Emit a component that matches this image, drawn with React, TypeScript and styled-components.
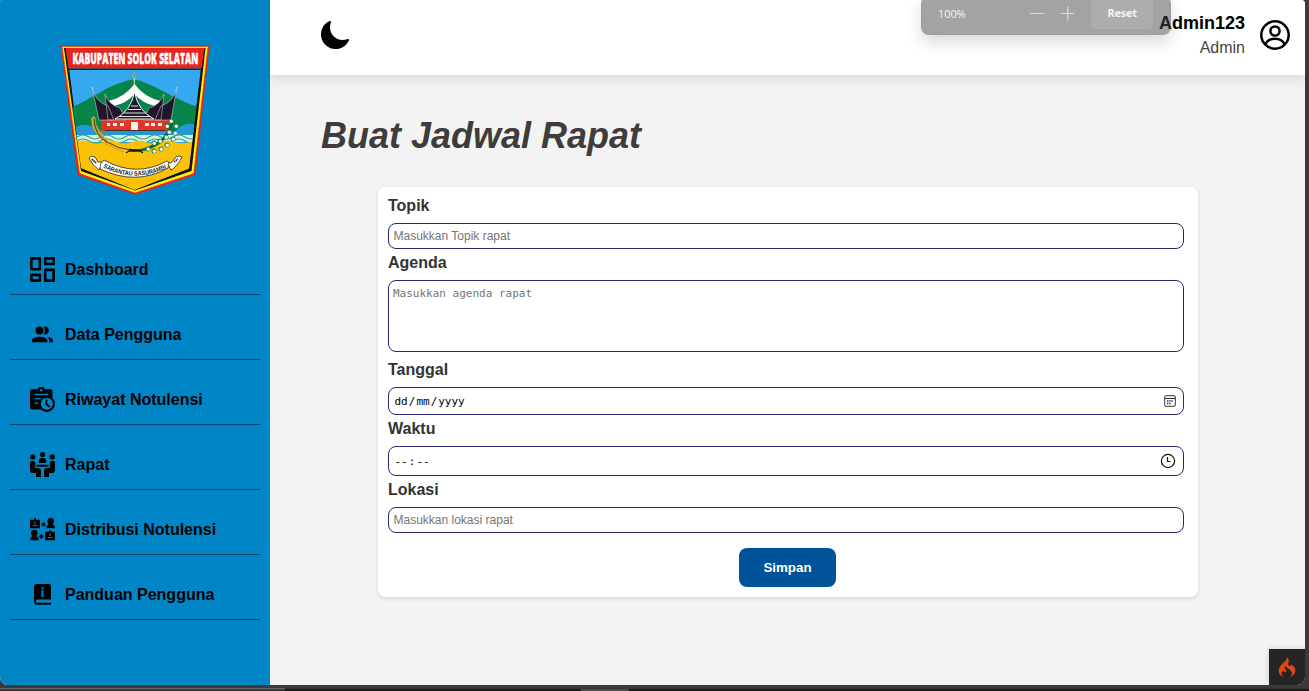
import React from "react";
import styled, { createGlobalStyle } from "styled-components";
import { IoMoon } from "react-icons/io5";
import { SiCodeigniter } from "react-icons/si";

const GlobalStyle = createGlobalStyle`
  * { box-sizing: border-box; }
  html, body { margin: 0; padding: 0; overflow: hidden; }
  body { font-family: "Liberation Sans", Arial, sans-serif; background: #383a3b; }
`;

const Desktop = styled.div`
  width: 1309px;
  height: 691px;
  background: #383a3b;
  display: flex;
  flex-direction: column;
  justify-content: space-between;
`;

const Window = styled.div`
  position: relative;
  width: 1305px;
  height: 685px;
  display: flex;
  background: #f3f3f3;
  border-radius: 2px 4px 8px 8px;
  overflow: hidden;
`;

const Taskbar = styled.div`
  display: flex;
  height: 3px;
  border-top: 1px solid #353535;
`;

const TaskSegment = styled.div<{ $width?: number; $color: string; $line?: boolean }>`
  height: ${(p) => (p.$line ? 3 : 2)}px;
  margin-top: ${(p) => (p.$line ? -1 : 0)}px;
  border-top: ${(p) => (p.$line ? "1px solid #686868" : "0")};
  background: ${(p) => p.$color};
  ${(p) => (p.$width ? `width: ${p.$width}px;` : "flex: 1;")}
`;

const Sidebar = styled.aside`
  width: 270px;
  flex: none;
  background: #0086c7;
  display: flex;
  flex-direction: column;
`;

const LogoBox = styled.div`
  height: 230px;
  padding: 35px 50px 0;
`;

const Menu = styled.nav`
  padding: 0 10px;
`;

const MenuItem = styled.a`
  height: 65px;
  padding: 15px 0 0 20px;
  display: flex;
  align-items: center;
  gap: 10px;
  border-bottom: 1px solid #09466a;
  color: #000;
  font-size: 16px;
  font-weight: bold;
  text-decoration: none;
  svg { flex: none; }
`;

const Main = styled.main`
  flex: 1;
  display: flex;
  flex-direction: column;
`;

const Header = styled.header`
  height: 75px;
  padding: 0 15px 0 50px;
  display: flex;
  align-items: center;
  justify-content: space-between;
  background: #fff;
  box-shadow: 0 3px 12px rgba(0, 0, 0, 0.13);
`;

const ThemeToggle = styled.div`
  display: flex;
  margin: -5px 0 0 -1px;
`;

const Profile = styled.div`
  display: flex;
  align-items: center;
  gap: 15px;
  margin-top: -5px;
`;

const ProfileText = styled.div`
  text-align: right;
`;

const UserName = styled.div`
  font-size: 18px;
  line-height: 24px;
  font-weight: bold;
  color: #000;
`;

const UserRole = styled.div`
  padding-top: 1px;
  margin-bottom: -1px;
  font-size: 16px;
  line-height: 24px;
  color: #454545;
`;

const Title = styled.h1`
  margin: 40px 0 31px 51px;
  font-size: 36px;
  line-height: 41px;
  font-style: italic;
  color: #403c3b;
`;

const Card = styled.form`
  width: 820px;
  height: 410px;
  margin-left: 108px;
  padding: 5px 14px 10px 10px;
  background: #fff;
  border-radius: 8px;
  box-shadow: 0 2px 4px rgba(0, 0, 0, 0.1);
  display: flex;
  flex-direction: column;
`;

const Label = styled.label`
  height: 31px;
  padding-bottom: 4px;
  line-height: 27px;
  font-size: 16px;
  font-weight: bold;
  color: #333;
`;

const Field = styled.div<{ $height: number }>`
  height: ${(p) => p.$height}px;
  flex: none;
  padding: 0 7px 0 4.5px;
  display: flex;
  align-items: center;
  justify-content: space-between;
  border: 1px solid #27286f;
  border-radius: 8px;
  background: #fff;
`;

const TextInput = styled.input`
  flex: 1;
  padding: 0;
  border: 0;
  outline: 0;
  background: none;
  font: 12px "Liberation Sans", Arial, sans-serif;
  &::placeholder { color: #757575; opacity: 1; }
`;

const TextArea = styled.textarea`
  height: 72px;
  flex: none;
  margin-bottom: 4px;
  padding: 6px 4px;
  border: 1px solid #27286f;
  border-radius: 8px;
  outline: 0;
  resize: none;
  font: 11px/14px "DejaVu Sans Mono", monospace;
  &::placeholder { color: #757575; opacity: 1; }
`;

const DateParts = styled.div`
  display: flex;
  font: 11px/15px "DejaVu Sans Mono", monospace;
  color: #000;
  span { padding: 0 1px; }
`;

const PickerIcon = styled.svg<{ $size: number }>`
  width: ${(p) => p.$size}px;
  height: ${(p) => p.$size}px;
`;

const SaveButton = styled.button`
  align-self: center;
  width: 97px;
  height: 39px;
  margin: 15px 0 0 3px;
  padding: 0;
  border: 0;
  border-radius: 8px;
  background: #005399;
  color: #fff;
  font: bold 13.333px "Liberation Sans", Arial, sans-serif;
`;

const ZoomPopup = styled.div`
  position: absolute;
  top: -4px;
  left: 921px;
  width: 250px;
  height: 39px;
  padding: 4px 17px 0 16px;
  display: flex;
  border-radius: 8px;
  border: 1px solid rgba(120, 120, 120, 0.15);
  border-top: 0;
  background: rgba(69, 69, 69, 0.494);
  box-shadow: 0 8px 16px rgba(0, 0, 0, 0.14);
  color: #f4f4f4;
  font: 500 11px/27px "Open Sans", sans-serif;
`;

const ZoomValue = styled.span`
  width: 91px;
  letter-spacing: -0.1px;
`;

const ZoomReset = styled.span`
  width: 62px;
  height: 29px;
  margin-left: 17px;
  line-height: 26px;
  text-align: center;
  font-weight: 700;
  letter-spacing: -0.2px;
  border-radius: 0 0 4px 4px;
  background: #adadad;
`;

const DebugBadge = styled.div`
  position: absolute;
  right: 0;
  bottom: 0;
  width: 36px;
  height: 36px;
  display: flex;
  align-items: center;
  justify-content: center;
  background: #252525;
  color: #dd4814;
  box-shadow: 0 0 6px rgba(0, 0, 0, 0.15);
`;

const grains = [0, 1, 2, 3, 4, 5, 6, 7];

const cotton = [
  [98, 114], [104, 108], [104, 116], [110, 106], [111, 114], [116, 102], [117, 110],
  [119, 97], [123, 104], [117, 91], [125, 98], [121, 86], [126, 91],
];

function RegencyCrest() {
  return (
    <svg width="170" height="170" viewBox="0 0 170 170">
      <defs>
        <clipPath id="crest"><path d="M15 14H153.500L139 133.500L84.500 155L31 133Z" /></clipPath>
        <path id="motto" d="M53 132.500Q86 149 119 132" />
      </defs>
      <path d="M10.500 10H159.500L145.500 140L85 159.800L27.500 140Z" fill="#e5231c" />
      <path d="M12 11.500H158L143.800 138.500L85 158L29.500 138.500Z" fill="#ffed14" stroke="#d9291f" strokeWidth=".8" strokeDasharray="1.500 1" />
      <path d="M14 13H155.500L141.500 136L85 155.500L31 136Z" fill="#111" />
      <g clipPath="url(#crest)">
        <path d="M19 33H151L139 135L85 153L32 135Z" fill="#35a8ef" />
        <path d="M20 73C42 64 57 51 73 47Q84 42 96 48C115 56 128 66 151 73L144 101H26Z" fill="#078449" />
        <path d="M26 92Q37 86 48 96H125Q136 86 145 90V101H27Z" fill="#2597d8" />
        <path d="M25 100H146V107H26Z" fill="#d8f1df" />
        <path d="M27 102Q33 98 39 102T51 102T63 102T75 102T87 102T99 102T111 102T123 102T135 102T147 102M27 106Q33 102 39 106T51 106T63 106T75 106T87 106T99 106T111 106T123 106T135 106T147 106" fill="none" stroke="#27a891" strokeWidth="1.200" />
        <path d="M26 107Q34 104 40 107T54 107T68 107T82 107T96 107T110 107T124 107T145 106L139 137L85 156L31 136Z" fill="#fbc008" />
      </g>
      <path d="M15.500 13H154.500L151.500 33.500H18.500Z" fill="#e5251d" />
      <path d="M18.500 33.500H151.500L150.500 35H19Z" fill="#25201e" />
      <g transform="translate(22.500 29) scale(.62 1)">
        <text textLength="203" lengthAdjust="spacingAndGlyphs" fontFamily="Open Sans, sans-serif" fontSize="16" fontWeight="800" fill="#fff" stroke="#fff" strokeWidth=".4">KABUPATEN SOLOK SELATAN</text>
      </g>
      <path d="M51 85H119V96H51Z" fill="#dd3524" />
      <path d="M58 66Q74 63 84.500 49Q95 63 111 66L105 71Q92 68 84.500 59Q77 68 64 71Z" fill="#fff" />
      <path d="M42 52Q45 67 58 71L64 85H49ZM55 59Q59 70 70 73L76 85H58ZM127 52Q124 67 111 71L105 85H121ZM114 59Q110 70 99 73L93 85H111Z" fill="#20162d" stroke="#ddd" strokeWidth=".5" />
      <path d="M84.500 57Q81 76 65 84H104Q88 76 84.500 57Z" fill="#201a2d" stroke="#f5f5f5" strokeWidth="1" />
      <path d="M81 71H88M78 74.500H91M74 78H95M69 81.500H100" stroke="#f5f5f5" strokeWidth=".9" />
      <path d="M56 86H114V95H56Z" fill="#dc3829" />
      <path d="M57 88H60V91H57ZM63 88H67V91H63ZM70 88H74V91H70ZM81 87H88V95H81ZM95 88H99V91H95ZM101 88H105V91H101ZM108 88H112V91H108Z" fill="#f5efed" />
      <path d="M55 95.500H115" stroke="#4a2a25" />
      <circle cx="84.300" cy="40.500" r="1.800" fill="none" stroke="#d9a51d" />
      <path d="M84.300 43V57" stroke="#efe8bc" />
      {grains.map((n) => (
        <g key={n}>
          <ellipse cx={43.500 + n * n * 0.250} cy={84.500 + n * 3} rx="1.800" ry="2.800" fill="#b99a25" stroke="#e2bd37" strokeWidth=".6" />
          <ellipse cx={50 + n * 3.200} cy={106 + n * 1.500} rx="2" ry=".8" fill="#dba412" />
        </g>
      ))}
      <path d="M44 84Q45 101 57 107Q68 114 81 115" fill="none" stroke="#433a1d" strokeWidth="1" />
      <path d="M79 115Q91 117 101 112Q118 105 122 87" fill="none" stroke="#126337" strokeWidth="3" />
      {cotton.map(([x, y]) => (
        <g key={`${x}-${y}`}>
          <circle cx={x} cy={y} r="2.500" fill="#118650" />
          <circle cx={x + 0.3} cy={y + 0.3} r="1.700" fill="#f2faee" />
        </g>
      ))}
      <path d="M76 118L80 115.500H89L93 118M79 115L89 115.500" fill="none" stroke="#201a15" strokeWidth="1.300" />
      <path d="M39 123Q41 120 45 122L48 127H53L49 135Q43 131 39 123ZM132 122Q129 120 126 122L121 128L117 127L121 135Q127 132 132 122Z" fill="#fff" stroke="#292222" strokeWidth=".8" />
      <path d="M54 125Q86 143 117 126Q120 127 118 133Q86 151 50 134Q49 129 54 125Z" fill="#fff" stroke="#292222" strokeWidth=".8" />
      <path d="M42 124L46 128M124 127L128 124" stroke="#333" strokeWidth="1.800" strokeDasharray="1.500 .6" />
      <text fontFamily="Liberation Sans, sans-serif" fontSize="6.400" fontWeight="bold" fill="#251d25"><textPath href="#motto" textLength="66" lengthAdjust="spacingAndGlyphs">SARANTAU SASURAMBI</textPath></text>
    </svg>
  );
}

const icons: Record<string, React.ReactNode> = {
  dashboard: (
    <g fill="none" stroke="#000" strokeWidth="2.600" strokeLinejoin="round">
      <path d="M1.400 1.400H9.800V12.300H1.400ZM15.200 1.400H23.700V7H15.200ZM1.400 17.900H9.800V23.600H1.400ZM15.200 12.900H23.700V23.600H15.200Z" />
    </g>
  ),
  people: (
    <g>
      <circle cx="9.500" cy="8.500" r="4" />
      <path d="M13.700 12.300Q16 8.500 13.700 4.700A4 4 0 1 1 13.700 12.300ZM2 20.300V18.500C2 15.800 6.500 14.700 9.700 14.700S17.300 15.800 17.300 18.500V20.300ZM17.200 14.900C20.300 15.200 23 16.300 23 18.500V20.300H19.300V18.500Q19.300 16.400 17.200 14.900Z" />
    </g>
  ),
  history: (
    <g>
      <path d="M2.500 2.200H8A3.200 3.200 0 0 1 14.400 2.200H20.500Q22.500 2.200 22.500 4.500V11A8.500 8.500 0 0 0 11 22.500H2.500Q0 22.500 0 20V4.500Q0 2.200 2.500 2.200ZM4.500 6.800V8.300H18.400V6.800ZM4.500 11V12.300H11.500V11ZM4.500 15.500V16.800H9V15.500ZM11.200 2A1.200 1.200 0 1 0 11.200 4.400A1.200 1.200 0 1 0 11.200 2Z" fillRule="evenodd" />
      <circle cx="16.800" cy="16.800" r="7.100" fill="#0086c7" stroke="#000" strokeWidth="2" />
      <path d="M16.400 12.600V17.200L19.800 20" fill="none" stroke="#000" strokeWidth="1.800" />
    </g>
  ),
  meeting: (
    <g>
      <circle cx="2.800" cy="4.900" r="2.700" />
      <circle cx="22.300" cy="4.900" r="2.700" />
      <circle cx="12.500" cy="2.600" r="2.600" />
      <path d="M8.800 11V9Q8.800 6 12.500 6T16.200 9V11ZM6.500 12.700H18.500V14.700H6.500ZM0 10.500Q0 8.800 2.500 8.800T5.200 10.500V15.900H8.300Q11 16 11 19V25H6V21H3Q0 21 0 18ZM25 10.500Q25 8.800 22.500 8.800T19.800 10.500V15.900H16.700Q14 16 14 19V25H19V21H22Q25 21 25 18Z" />
    </g>
  ),
  distribute: (
    <g>
      <path d="M0 2.800H4V1.300H6V2.800H10V11.300H0ZM15 14.800H19V13.300H21V14.800H25V23.300H15Z" />
      <path d="M5 4.500V7M20 16.500V19M2.700 8.500H7.400M17.700 20.500H22.400" stroke="#0086c7" strokeWidth="1.100" />
      <circle cx="20.700" cy="4.300" r="3.300" />
      <circle cx="4.300" cy="16" r="3.300" />
      <path d="M18.700 5.500H22.700V7.500Q25 8 25 11.300H16.400Q16.400 8 18.700 7.500ZM2.300 17.500H6.300V19.300Q8.800 20 8.800 23.300H0Q0 20 2.300 19.300Z" />
      <path d="M13.700 5.500V9.500M11.600 7.500H15.800M11.300 17.500V21.500M9.200 19.500H13.400" stroke="#000" strokeWidth="2" />
    </g>
  ),
  guide: (
    <g>
      <path d="M7 2H19Q21 2 21 4V17.500H7Q6 17.500 6 19T7 20.700H21V22.800H7.500Q4 22.800 4 19.500V5Q4 2 7 2Z" />
      <path d="M12.500 5.200V7.200M12.500 8.500V14.500" stroke="#0086c7" strokeWidth="2" />
      <path d="M11.300 9H12.500M11.300 14.300H13.800" stroke="#0086c7" strokeWidth=".8" />
    </g>
  ),
};

const menu = [
  { icon: "dashboard", text: "Dashboard" },
  { icon: "people", text: "Data Pengguna" },
  { icon: "history", text: "Riwayat Notulensi" },
  { icon: "meeting", text: "Rapat" },
  { icon: "distribute", text: "Distribusi Notulensi" },
  { icon: "guide", text: "Panduan Pengguna" },
];

export default function App() {
  return (
    <Desktop>
      <GlobalStyle />
      <Window>
        <Sidebar>
          <LogoBox><RegencyCrest /></LogoBox>
          <Menu>
            {menu.map((item) => (
              <MenuItem key={item.text}>
                <svg width="25" height="25" viewBox="0 0 25 25">{icons[item.icon]}</svg>
                {item.text}
              </MenuItem>
            ))}
          </Menu>
        </Sidebar>
        <Main>
          <Header>
            <ThemeToggle><IoMoon size={32} /></ThemeToggle>
            <Profile>
              <ProfileText>
                <UserName>Admin123</UserName>
                <UserRole>Admin</UserRole>
              </ProfileText>
              <svg width="30" height="30" viewBox="0 0 30 30" fill="none" stroke="#000" strokeWidth="2.500">
                <circle cx="15" cy="15" r="13.700" />
                <circle cx="15" cy="11" r="4.600" />
                <path d="M5.200 24.500C7 20.500 10.500 18.700 15 18.700S23 20.500 24.800 24.500" />
              </svg>
            </Profile>
          </Header>
          <Title>Buat Jadwal Rapat</Title>
          <Card>
            <Label>Topik</Label>
            <Field $height={26}><TextInput placeholder="Masukkan Topik rapat" /></Field>
            <Label>Agenda</Label>
            <TextArea placeholder="Masukkan agenda rapat" />
            <Label>Tanggal</Label>
            <Field $height={28}>
              <DateParts><span>dd</span>/<span>mm</span>/<span>yyyy</span></DateParts>
              <PickerIcon $size={12} viewBox="0 0 12 12" fill="none" stroke="#333">
                <rect x=".7" y=".7" width="10.600" height="10.600" rx="1.300" />
                <path d="M.5 3.500H11.500" />
                <path d="M3 6H9.500M3 8.500H7.500" strokeWidth="1.400" strokeDasharray="1.400 .8" />
              </PickerIcon>
            </Field>
            <Label>Waktu</Label>
            <Field $height={30}>
              <DateParts><span>--</span>:<span>--</span></DateParts>
              <PickerIcon $size={16} viewBox="0 0 16 16" fill="none" stroke="#111" strokeWidth="1.200">
                <circle cx="8" cy="8" r="6.600" />
                <path d="M7.500 4V8.500H10.500" />
              </PickerIcon>
            </Field>
            <Label>Lokasi</Label>
            <Field $height={26}><TextInput placeholder="Masukkan lokasi rapat" /></Field>
            <SaveButton type="button">Simpan</SaveButton>
          </Card>
        </Main>
        <ZoomPopup>
          <ZoomValue>100%</ZoomValue>
          <svg width="46" height="28" viewBox="0 0 46 28" stroke="#dedede" strokeWidth="1.200">
            <path d="M1 13.500H15M32 13.500H46M39 6.500V20.500" />
          </svg>
          <ZoomReset>Reset</ZoomReset>
        </ZoomPopup>
        <DebugBadge><SiCodeigniter size={20} /></DebugBadge>
      </Window>
      <Taskbar>
        <TaskSegment $width={285} $color="#373737" $line />
        <TaskSegment $width={296} $color="#1c1a1c" />
        <TaskSegment $width={48} $color="#4c4a4d" />
        <TaskSegment $color="#1c1a1c" />
      </Taskbar>
    </Desktop>
  );
}
